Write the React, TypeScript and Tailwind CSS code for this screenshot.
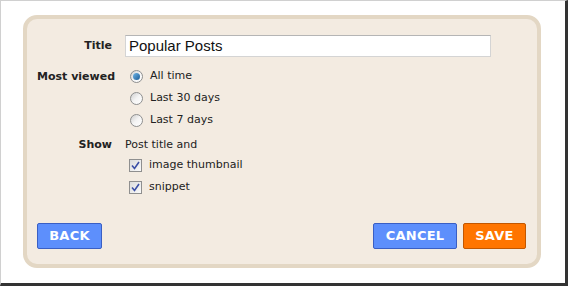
function Radio({ checked }: { checked?: boolean }) {
  return (
    <span className="flex h-[13px] w-[13px] shrink-0 items-center justify-center rounded-full border border-[#8e8f8f] bg-gradient-to-br from-[#cfcfcf] via-[#f4f4f4] to-[#ffffff]">
      {checked && (
        <span className="h-[7px] w-[7px] rounded-full bg-gradient-to-br from-[#6fb6e8] to-[#1a5c96]" />
      )}
    </span>
  );
}

function Checkbox() {
  return (
    <span className="flex h-[13px] w-[13px] shrink-0 items-center justify-center border border-[#8f8f8f] bg-gradient-to-br from-[#dcdcdc] to-[#fafafa]">
      <svg width="9" height="9" viewBox="0 0 9 9">
        <path d="M1 4.5 L3.5 7.5 L8 1" fill="none" stroke="#3b4fa6" strokeWidth="1.6" />
      </svg>
    </span>
  );
}

function Button({ tone, children }: { tone: "blue" | "orange"; children: string }) {
  const toneClasses: Record<typeof tone, string> = {
    blue: "bg-[#5d8ffc] border-[#3a5fc4]",
    orange: "bg-[#ff7500] border-[#c25700]",
  };
  return (
    <button
      className={`flex h-[26px] w-full items-center justify-center rounded-[2px] border text-[13px] font-bold tracking-[0.02em] text-white ${toneClasses[tone]}`}
    >
      {children}
    </button>
  );
}

export default function App() {
  return (
    <div className="h-[288px] w-[570px] bg-white" style={{ fontFamily: "'DejaVu Sans', Verdana, sans-serif" }}>
      <div className="h-[286px] w-[568px] border-l border-t border-b-[3px] border-r-[3px] border-l-[#d0d0d0] border-t-[#d0d0d0] border-b-[#333] border-r-[#333] bg-white pl-[22px] pt-[14px]">
        <div className="flex h-[253px] w-[518px] flex-col rounded-[14px] border-4 border-[#e3d7c4] bg-[#f3ebe1] pb-[15px] pl-[10px] pr-[11px] pt-[16px] text-[11px] text-[#222]">
          <div className="grid grid-cols-[75px_1fr] items-center gap-x-[13px]">
            <div className="text-right font-bold">Title</div>
            <div className="flex h-[22px] w-[366px] items-center border border-[#d4d4d4] border-t-[#b5b5b5] bg-white pl-[3px] text-[15px] text-[#111]" style={{ fontFamily: "'Liberation Sans', Arial, sans-serif" }}>
              Popular Posts
            </div>
          </div>

          <div className="mt-[8px] grid grid-cols-[75px_1fr] gap-x-[13px]">
            <div className="whitespace-nowrap pt-[4px] text-right font-bold">Most viewed</div>
            <div className="flex flex-col">
              {["All time", "Last 30 days", "Last 7 days"].map((label, i) => (
                <div key={label} className="flex h-[22px] items-center gap-[7px] pl-[5px]">
                  <Radio checked={i === 0} />
                  <span>{label}</span>
                </div>
              ))}
            </div>
          </div>

          <div className="mt-[5px] grid grid-cols-[75px_1fr] gap-x-[13px]">
            <div className="text-right font-bold leading-[18px]">Show</div>
            <div className="flex flex-col">
              <div className="leading-[18px]">Post title and</div>
              {["image thumbnail", "snippet"].map((label) => (
                <div key={label} className="flex h-[22px] items-center gap-[7px] pl-[4px]">
                  <Checkbox />
                  <span>{label}</span>
                </div>
              ))}
            </div>
          </div>

          <div className="mt-auto flex items-center">
            <div className="w-[65px]">
              <Button tone="blue">BACK</Button>
            </div>
            <div className="ml-auto flex gap-[6px]">
              <div className="w-[84px]">
                <Button tone="blue">CANCEL</Button>
              </div>
              <div className="w-[63px]">
                <Button tone="orange">SAVE</Button>
              </div>
            </div>
          </div>
        </div>
      </div>
    </div>
  );
}
